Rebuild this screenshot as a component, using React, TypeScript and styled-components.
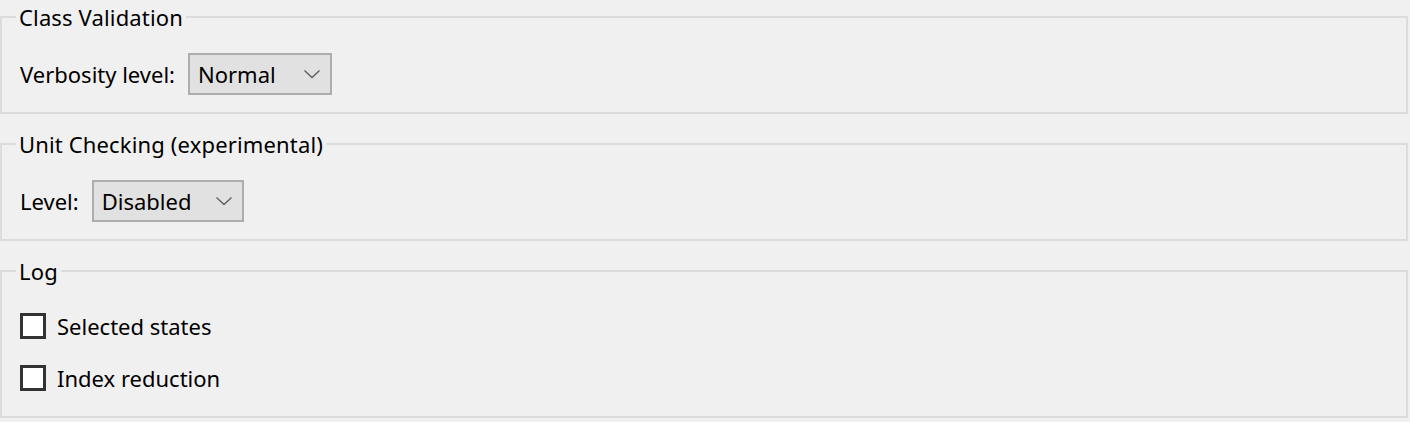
import React, { useState } from "react";
import styled, { createGlobalStyle } from "styled-components";

const GlobalStyle = createGlobalStyle`
  html, body {
    margin: 0;
    padding: 0;
    background: #f0f0f0;
  }
  body {
    font-family: "Noto Sans", "Open Sans", sans-serif;
    color: #000;
  }
`;

export default function App() {
  const [verbosity, setVerbosity] = useState("Normal");
  const [level, setLevel] = useState("Disabled");
  const [checks, setChecks] = useState({ selected: false, index: false });

  return (
    <Page>
      <GlobalStyle />
      <Group>
        <Legend>Class Validation</Legend>
        <Row>
          <Label>Verbosity level:</Label>
          <Combo width={144}>
            <ComboText>{verbosity}</ComboText>
            <Chevron />
            <HiddenSelect value={verbosity} onChange={(e) => setVerbosity(e.target.value)}>
              <option>Normal</option>
              <option>Verbose</option>
              <option>Quiet</option>
            </HiddenSelect>
          </Combo>
        </Row>
      </Group>

      <Group>
        <Legend>Unit Checking (experimental)</Legend>
        <Row>
          <Label>Level:</Label>
          <Combo width={152}>
            <ComboText>{level}</ComboText>
            <Chevron />
            <HiddenSelect value={level} onChange={(e) => setLevel(e.target.value)}>
              <option>Disabled</option>
              <option>Enabled</option>
            </HiddenSelect>
          </Combo>
        </Row>
      </Group>

      <Group tall>
        <Legend>Log</Legend>
        <CheckList>
          <CheckRow>
            <Box
              checked={checks.selected}
              onClick={() => setChecks({ ...checks, selected: !checks.selected })}
            />
            Selected states
          </CheckRow>
          <CheckRow>
            <Box
              checked={checks.index}
              onClick={() => setChecks({ ...checks, index: !checks.index })}
            />
            Index reduction
          </CheckRow>
        </CheckList>
      </Group>
    </Page>
  );
}

const Chevron = () => (
  <ChevronSvg width="18" height="10" viewBox="0 0 18 10">
    <path d="M1.5 1.5 L9 8.5 L16.5 1.5" fill="none" stroke="#606060" strokeWidth="1.4" />
  </ChevronSvg>
);

const Page = styled.div`
  display: flex;
  flex-direction: column;
  padding: 3px 2px 0 0;
`;

const Group = styled.fieldset<{ tall?: boolean }>`
  margin: 0 0 16px 0;
  border: 2px solid #dcdcdc;
  padding: ${({ tall }) => (tall ? "15px 17px 12px" : "22px 17px 17px")};
  min-width: 0;
`;

const Legend = styled.legend`
  font-size: 22px;
  line-height: 28px;
  padding: 0 3px;
  margin-left: -3px;
  letter-spacing: 0.15px;
`;

const Row = styled.div`
  display: flex;
  align-items: center;
  gap: 13px;
  height: 42px;
`;

const Label = styled.span`
  font-size: 22px;
  margin-left: 1px;
`;

const Combo = styled.label<{ width: number }>`
  position: relative;
  box-sizing: border-box;
  width: ${({ width }) => width}px;
  height: 42px;
  display: flex;
  align-items: center;
  justify-content: space-between;
  padding: 0 9px 0 8px;
  background: #e1e1e1;
  border: 2px solid #adadad;
`;

const ComboText = styled.span`
  font-size: 22px;
`;

const ChevronSvg = styled.svg`
  display: block;
`;

const HiddenSelect = styled.select`
  position: absolute;
  inset: 0;
  opacity: 0;
  cursor: pointer;
`;

const CheckList = styled.div`
  display: flex;
  flex-direction: column;
`;

const CheckRow = styled.div`
  display: flex;
  align-items: center;
  gap: 11px;
  height: 52px;
  font-size: 22px;
  padding-left: 1px;
`;

const Box = styled.span<{ checked?: boolean }>`
  box-sizing: border-box;
  width: 26px;
  height: 26px;
  border: 3px solid #333;
  background: ${({ checked }) => (checked ? "#333" : "#fff")};
  cursor: pointer;
`;
